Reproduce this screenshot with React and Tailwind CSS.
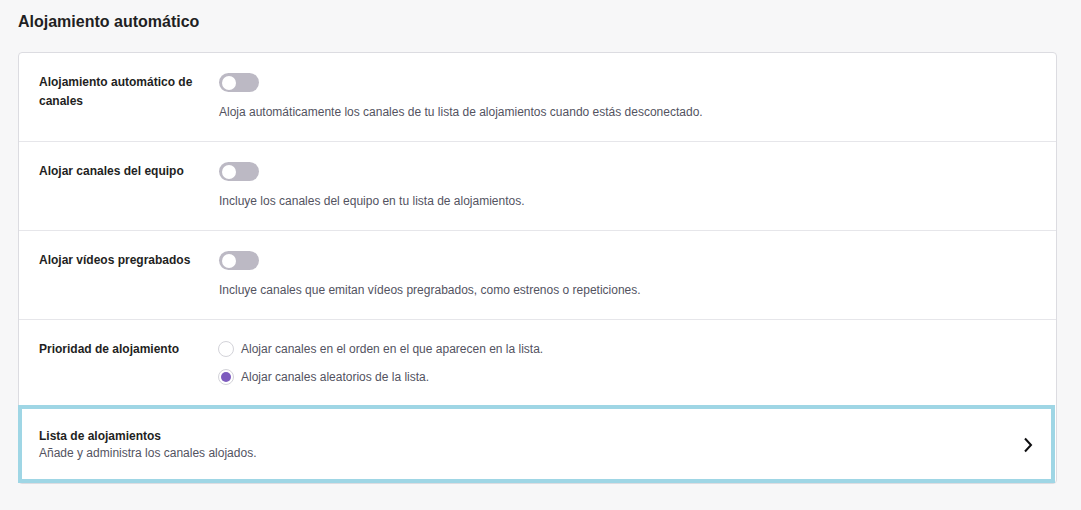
import React, { useState } from "react";

const font = { fontFamily: '"Liberation Sans", Arial, sans-serif' };

const Toggle = ({ on, onChange }) => (
  <button
    type="button"
    onClick={onChange}
    className={`relative w-[40px] h-[19px] rounded-full transition ${on ? "bg-[#7d5bbe]" : "bg-[#bcb9c4]"}`}
  >
    <span
      className={`absolute top-[2.5px] w-[14px] h-[14px] rounded-full bg-white transition-all ${on ? "left-[23px]" : "left-[3px]"}`}
    />
  </button>
);

const Radio = ({ checked, label, onClick }) => (
  <label className="flex items-center gap-[7px] cursor-pointer" onClick={onClick}>
    <span className="w-[16px] h-[16px] rounded-full border border-[#d3d3d9] bg-white flex items-center justify-center">
      {checked && <span className="w-[10px] h-[10px] rounded-full bg-[#7d5bbe]" />}
    </span>
    <span className="text-[12px] text-[#53535f]">{label}</span>
  </label>
);

const Row = ({ label, children }) => (
  <div className="flex pl-[20px] pr-[21px] pt-[20px] h-[89px] border-b border-[#e6e6ea]">
    <div className="w-[180px] shrink-0 text-[12px] font-bold text-[#1f1f23] leading-[19px] pr-[18px]">{label}</div>
    <div className="flex-1">{children}</div>
  </div>
);

export default function App() {
  const [toggles, setToggles] = useState([false, false, false]);
  const [priority, setPriority] = useState(1);

  const flip = (i) => setToggles(toggles.map((t, j) => (j === i ? !t : t)));

  const rows = [
    {
      label: "Alojamiento automático de canales",
      desc: "Aloja automáticamente los canales de tu lista de alojamientos cuando estás desconectado.",
    },
    { label: "Alojar canales del equipo", desc: "Incluye los canales del equipo en tu lista de alojamientos." },
    {
      label: "Alojar vídeos pregrabados",
      desc: "Incluye canales que emitan vídeos pregrabados, como estrenos o repeticiones.",
    },
  ];

  return (
    <div style={font} className="min-h-[510px] bg-[#f7f7f8] pl-[18px] pr-[24px] pt-[12px]">
      <h2 className="text-[16px] font-bold text-[#1f1f23] leading-[20px] mb-[20px]">Alojamiento automático</h2>
      <div className="bg-white border border-[#dcdce1] rounded-[4px] w-[1039px]">
        {rows.map((r, i) => (
          <Row key={i} label={r.label}>
            <Toggle on={toggles[i]} onChange={() => flip(i)} />
            <p className="mt-[5px] text-[12px] text-[#53535f] leading-[16px]">{r.desc}</p>
          </Row>
        ))}
        <div className="flex pl-[20px] pr-[21px] pt-[20px] h-[85px]">
          <div className="w-[180px] shrink-0 text-[12px] font-bold text-[#1f1f23] leading-[19px]">Prioridad de alojamiento</div>
          <div className="flex-1 flex flex-col gap-[10px] -ml-[1px]">
            <Radio checked={priority === 0} onClick={() => setPriority(0)} label="Alojar canales en el orden en el que aparecen en la lista." />
            <Radio checked={priority === 1} onClick={() => setPriority(1)} label="Alojar canales aleatorios de la lista." />
          </div>
        </div>
        <button
          type="button"
          className="w-[1037px] -ml-px h-[78px] border-[4px] border-[#9fd6e5] flex items-center justify-between pl-[17px] pr-[16px] pt-[2px] text-left"
        >
          <div>
            <div className="text-[12px] font-bold text-[#1f1f23] leading-[17px]">Lista de alojamientos</div>
            <div className="text-[12px] text-[#53535f] leading-[17px]">Añade y administra los canales alojados.</div>
          </div>
          <svg width="14" height="16" viewBox="0 0 14 16" fill="none">
            <path d="M4 1.5 L10 8 L4 14.5" stroke="#0e0e10" strokeWidth="2" />
          </svg>
        </button>
      </div>
    </div>
  );
}
